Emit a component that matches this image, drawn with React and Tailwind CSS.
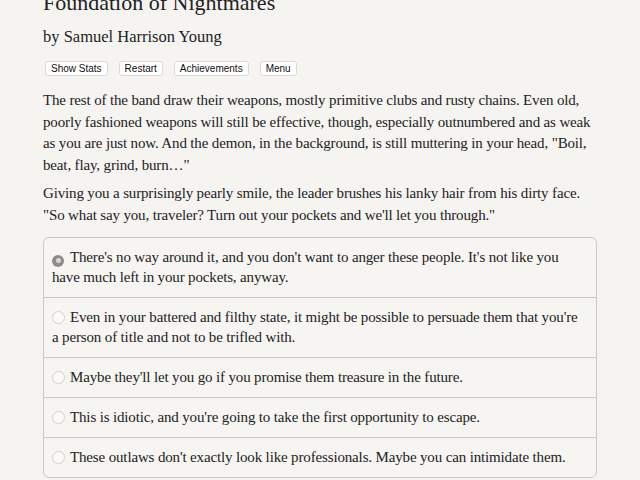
import React, { useState } from 'react';

const choices = [
  "There's no way around it, and you don't want to anger these people. It's not like you have much left in your pockets, anyway.",
  "Even in your battered and filthy state, it might be possible to persuade them that you're a person of title and not to be trifled with.",
  "Maybe they'll let you go if you promise them treasure in the future.",
  "This is idiotic, and you're going to take the first opportunity to escape.",
  "These outlaws don't exactly look like professionals. Maybe you can intimidate them.",
];

const buttons = ['Show Stats', 'Restart', 'Achievements', 'Menu'];

const Radio = ({ checked }) =>
  checked ? (
    <span className="inline-flex w-[12px] h-[12px] rounded-full bg-[#8e8c8a] items-center justify-center align-[-1px] mr-[6px]">
      <span className="w-[5px] h-[5px] rounded-full bg-[#d9d7d4]" />
    </span>
  ) : (
    <span className="inline-block w-[13px] h-[13px] rounded-full border border-[#d4d2cf] bg-[#fbfaf8] align-[-2px] mr-[5px]" />
  );

const App = () => {
  const [selected, setSelected] = useState(0);

  return (
    <div className="min-h-[480px] bg-[#f6f4f1] text-[#222] font-['Liberation_Serif',serif] overflow-hidden">
      <div className="w-[554px] ml-[43px]">
        <h1 className="text-[22px] leading-[26px] mt-[-10px]">Foundation of Nightmares</h1>
        <h2 className="text-[16.5px] leading-[20px] mt-[11px]">by Samuel Harrison Young</h2>

        <div className="flex gap-[11px] mt-[14px] ml-[2px]">
          {buttons.map((b) => (
            <button
              key={b}
              className="h-[15px] px-[5px] bg-white border border-[#dcdad6] rounded-[3px] text-[10px] leading-[13px] text-[#111] font-['Liberation_Sans',sans-serif]"
            >
              {b}
            </button>
          ))}
        </div>

        <p className="text-[15px] leading-[21.5px] tracking-[-0.15px] mt-[14px]">
          The rest of the band draw their weapons, mostly primitive clubs and rusty chains. Even old, poorly fashioned weapons will still be effective, though, especially outnumbered and as weak as you are just now. And the demon, in the background, is still muttering in your head, "Boil, beat, flay, grind, burn…"
        </p>
        <p className="text-[15px] leading-[21.5px] tracking-[-0.15px] mt-[7px]">
          Giving you a surprisingly pearly smile, the leader brushes his lanky hair from his dirty face. "So what say you, traveler? Turn out your pockets and we'll let you through."
        </p>

        <div className="mt-[11px] border border-[#c9c7c3] rounded-[6px] bg-[#f7f5f2] overflow-hidden">
          {choices.map((c, i) => (
            <div
              key={i}
              onClick={() => setSelected(i)}
              className={`pl-[8px] pr-[12px] pt-[9px] pb-[10px] text-[15px] leading-[20px] tracking-[-0.15px] cursor-pointer ${i > 0 ? 'border-t border-[#c9c7c3]' : ''}`}
            >
              <Radio checked={selected === i} />
              {c}
            </div>
          ))}
        </div>
      </div>
    </div>
  );
};

export default App;
